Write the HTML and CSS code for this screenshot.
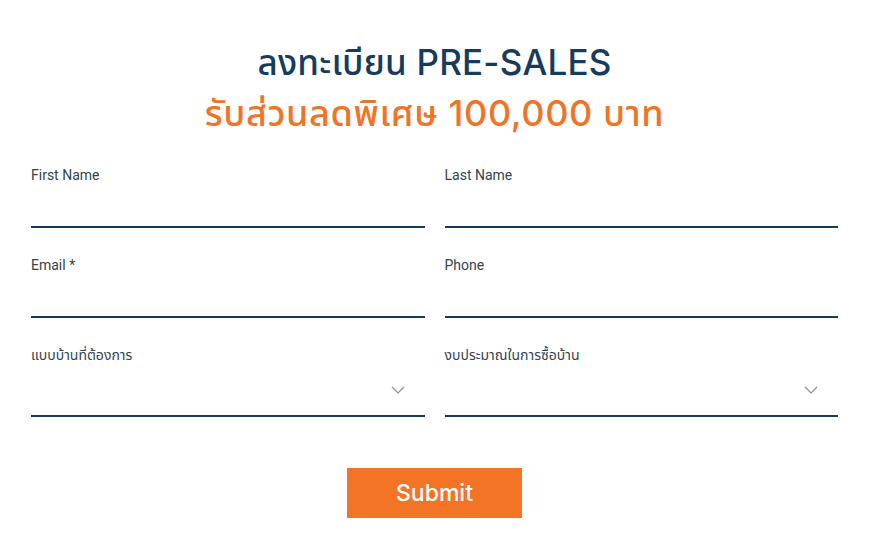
FILE: index.html
```html
<!DOCTYPE html>
<html lang="th">
<head>
    <meta charset="UTF-8">
    <meta name="viewport" content="width=device-width, initial-scale=1.0">
    <title>Pre-Sales Register</title>
    <link rel="stylesheet" href="styles.css">
</head>
<body>
    <main class="register">
        <header class="register-head">
            <h1 class="title">ลงทะเบียน PRE-SALES</h1>
            <h2 class="subtitle">รับส่วนลดพิเศษ 100,000 บาท</h2>
        </header>

        <form class="register-form" action="#" method="POST">
            <div class="field">
                <label for="first">First Name</label>
                <input type="text" id="first" name="first">
            </div>
            <div class="field">
                <label for="last">Last Name</label>
                <input type="text" id="last" name="last">
            </div>
            <div class="field">
                <label for="email">Email *</label>
                <input type="email" id="email" name="email" required>
            </div>
            <div class="field">
                <label for="phone">Phone</label>
                <input type="tel" id="phone" name="phone">
            </div>
            <div class="field">
                <label for="type">แบบบ้านที่ต้องการ</label>
                <div class="select-wrap">
                    <select id="type" name="type">
                        <option value=""></option>
                    </select>
                    <svg class="chevron" width="14" height="8" viewBox="0 0 14 8"><path d="M1 1l6 6 6-6" fill="none" stroke="#8a8f94" stroke-width="1.2"/></svg>
                </div>
            </div>
            <div class="field">
                <label for="budget">งบประมาณในการซื้อบ้าน</label>
                <div class="select-wrap">
                    <select id="budget" name="budget">
                        <option value=""></option>
                    </select>
                    <svg class="chevron" width="14" height="8" viewBox="0 0 14 8"><path d="M1 1l6 6 6-6" fill="none" stroke="#8a8f94" stroke-width="1.2"/></svg>
                </div>
            </div>
            <div class="actions">
                <button type="submit" class="submit">Submit</button>
            </div>
        </form>
    </main>
</body>
</html>
```

FILE: styles.css
```css
/* Pre-sales register form */
body {
    margin: 0;
    padding: 0;
    background-color: #fff;
    font-family: Roboto, "Noto Sans Thai", "Noto Sans", sans-serif;
}

.register {
    width: 807px;
    margin: 0 0 0 31px;
    padding-top: 37px;
}

.register-head {
    text-align: center;
}

.title, .subtitle {
    margin: 0;
    font-family: Inter, "Noto Sans Thai", "Noto Sans", sans-serif;
    font-weight: 500;
    font-size: 35px;
    line-height: 50px;
    letter-spacing: 0.2px;
}

.title {
    color: #163b5c;
}

.subtitle {
    margin-top: 1px;
    font-size: 36px;
    letter-spacing: 0.6px;
    color: #f07427;
}

.register-form {
    display: grid;
    grid-template-columns: 1fr 1fr;
    column-gap: 20px;
    row-gap: 28px;
    margin-top: 28px;
}

.field {
    display: flex;
    flex-direction: column;
}

.field label {
    font-size: 14px;
    line-height: 18px;
    color: #34444f;
}

.field input {
    border: none;
    border-bottom: 2px solid #163b5c;
    height: 42px;
    padding: 0;
    font-size: 14px;
    outline: none;
    background: transparent;
}

.select-wrap {
    position: relative;
}

.field select {
    display: block;
    width: 100%;
    height: 53px;
    border: none;
    border-bottom: 2px solid #163b5c;
    border-radius: 0;
    background: transparent;
    appearance: none;
    -webkit-appearance: none;
    outline: none;
    font-size: 14px;
}

.chevron {
    position: absolute;
    right: 20px;
    top: 22px;
    pointer-events: none;
}

.actions {
    grid-column: 1 / 3;
    display: flex;
    justify-content: center;
    margin-top: 23px;
}

.submit {
    width: 175px;
    height: 50px;
    background-color: #f37424;
    color: #fff;
    border: none;
    font-family: Inter, sans-serif;
    font-weight: 500;
    font-size: 23px;
    cursor: pointer;
}
```
